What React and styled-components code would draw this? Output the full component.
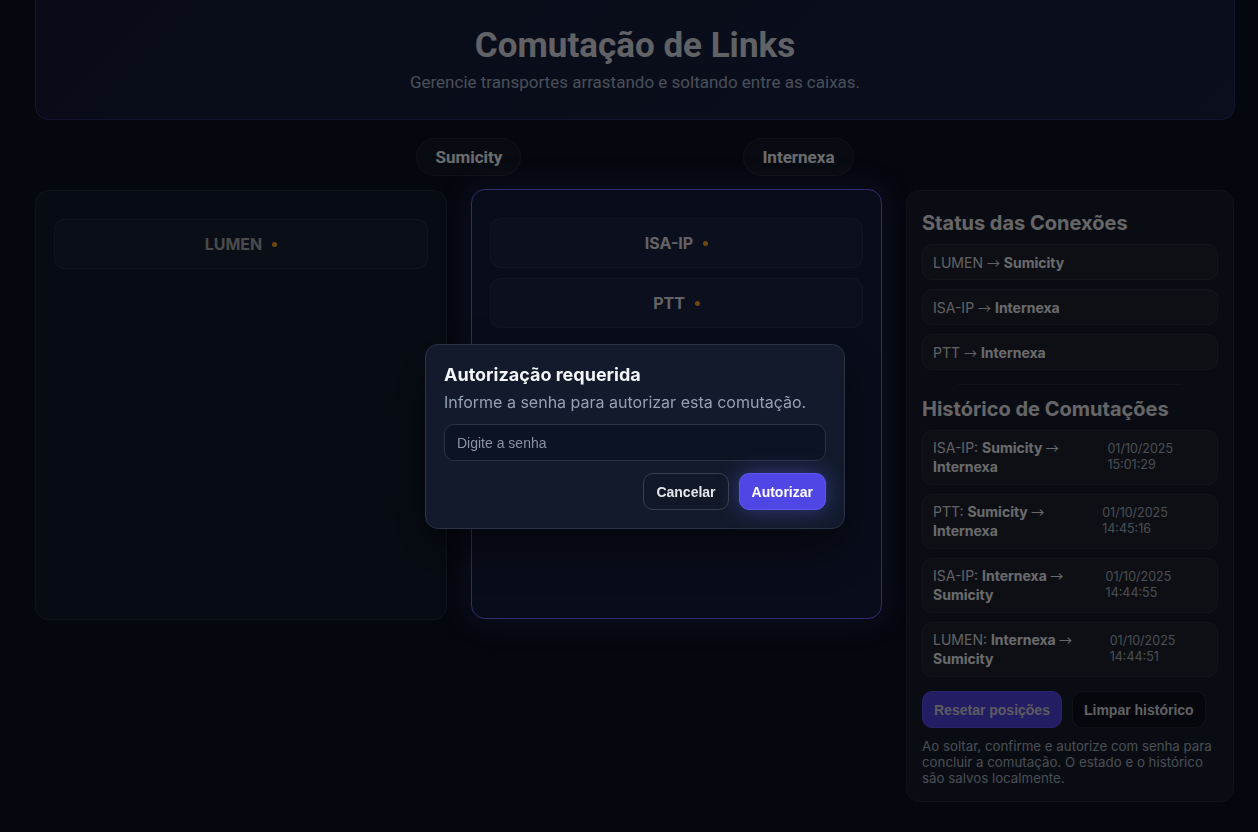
import React from "react";
import styled, { createGlobalStyle } from "styled-components";

const GlobalStyle = createGlobalStyle`
  * { box-sizing: border-box; }
  html, body { margin: 0; padding: 0; }
  body {
    background: #0b1020;
    color: #e5e7eb;
    font-family: Inter, "Noto Sans", sans-serif;
    overflow: hidden;
  }
`;

const connections = [
  { link: "LUMEN", to: "Sumicity" },
  { link: "ISA-IP", to: "Internexa" },
  { link: "PTT", to: "Internexa" },
];

const history = [
  { link: "ISA-IP", from: "Sumicity", to: "Internexa", at: "01/10/2025 15:01:29" },
  { link: "PTT", from: "Sumicity", to: "Internexa", at: "01/10/2025 14:45:16" },
  { link: "ISA-IP", from: "Internexa", to: "Sumicity", at: "01/10/2025 14:44:55" },
  { link: "LUMEN", from: "Internexa", to: "Sumicity", at: "01/10/2025 14:44:51" },
];

const App = () => {
  return (
    <>
      <GlobalStyle />
      <Page>
        <Header>
          <Title>Comutação de Links</Title>
          <Subtitle>Gerencie transportes arrastando e soltando entre as caixas.</Subtitle>
        </Header>

        <PillRow>
          <Pill>Sumicity</Pill>
          <Pill>Internexa</Pill>
        </PillRow>

        <Board>
          <DropBox>
            <LinkCard dim>
              LUMEN <Dot />
            </LinkCard>
          </DropBox>
          <DropBox active>
            <LinkCard>
              ISA-IP <Dot />
            </LinkCard>
            <LinkCard>
              PTT <Dot />
            </LinkCard>
          </DropBox>

          <Side>
            <SideTitle>Status das Conexões</SideTitle>
            <List>
              {connections.map((c) => (
                <StatusRow key={c.link}>
                  <span>
                    {c.link} <Arrow>→</Arrow> <b>{c.to}</b>
                  </span>
                </StatusRow>
              ))}
            </List>
            <Divider />
            <SideTitle>Histórico de Comutações</SideTitle>
            <List>
              {history.map((h, i) => (
                <HistoryRow key={i}>
                  <span>
                    {h.link}:{" "}
                    <b>
                      {h.from} <Arrow>→</Arrow> {h.to}
                    </b>
                  </span>
                  <When>{h.at}</When>
                </HistoryRow>
              ))}
            </List>
            <Actions>
              <Button primary>Resetar posições</Button>
              <Button>Limpar histórico</Button>
            </Actions>
            <Note>
              Ao soltar, confirme e autorize com senha para concluir a comutação. O
              estado e o histórico são salvos localmente.
            </Note>
          </Side>
        </Board>
      </Page>

      <Overlay>
        <Dialog>
          <DialogTitle>Autorização requerida</DialogTitle>
          <DialogText>Informe a senha para autorizar esta comutação.</DialogText>
          <Input type="password" placeholder="Digite a senha" />
          <DialogActions>
            <DialogButton>Cancelar</DialogButton>
            <DialogButton primary>Autorizar</DialogButton>
          </DialogActions>
        </Dialog>
      </Overlay>
    </>
  );
};

const Page = styled.div`
  width: 1235px;
  padding-left: 35px;
  margin-top: -14px;
`;

const Header = styled.header`
  height: 134px;
  padding-top: 39px;
  text-align: center;
  background: linear-gradient(135deg, #151b36, #181f40);
  border: 1px solid rgba(99, 102, 241, 0.28);
  border-radius: 14px;
`;

const Title = styled.h1`
  margin: 0;
  font-family: Roboto, "Liberation Sans", sans-serif;
  font-size: 35px;
  font-weight: 700;
  line-height: 40px;
  color: #d6d9df;
`;

const Subtitle = styled.p`
  margin: 6px 0 0;
  font-family: Roboto, "Liberation Sans", sans-serif;
  font-size: 17px;
  color: #a3afc4;
`;

const PillRow = styled.div`
  display: flex;
  justify-content: center;
  gap: 222px;
  margin: 18px 0 14px;
`;

const Pill = styled.div`
  height: 38px;
  padding: 0 18px;
  display: flex;
  align-items: center;
  border-radius: 19px;
  font-family: Roboto, "Liberation Sans", sans-serif;
  font-size: 17px;
  font-weight: 700;
  color: #eceef2;
  background: rgba(255, 255, 255, 0.04);
  border: 1px solid rgba(255, 255, 255, 0.07);
`;

const Board = styled.div`
  display: grid;
  grid-template-columns: 412px 411px 328px;
  gap: 24px;
  align-items: start;
`;

const DropBox = styled.div`
  height: 430px;
  padding: 28px 18px;
  display: flex;
  flex-direction: column;
  gap: 10px;
  border-radius: 14px;
  background: ${(p) => (p.active ? "#141b3c" : "#101a2c")};
  border: 1px solid ${(p) => (p.active ? "#6d63f0" : "rgba(255,255,255,0.07)")};
  box-shadow: ${(p) => (p.active ? "0 0 30px rgba(99,102,241,0.25)" : "none")};
  margin-top: ${(p) => (p.active ? "-1px" : "0")};
`;

const LinkCard = styled.div`
  height: 50px;
  display: flex;
  align-items: center;
  justify-content: center;
  gap: 10px;
  border-radius: 11px;
  font-size: 16px;
  font-weight: 700;
  color: ${(p) => (p.dim ? "#a4a4a8" : "#dcdce0")};
  background: rgba(255, 255, 255, 0.035);
  border: 1px solid rgba(255, 255, 255, 0.06);
`;

const Dot = styled.span`
  width: 5px;
  height: 5px;
  border-radius: 50%;
  background: #f0a21a;
`;

const Side = styled.aside`
  padding: 19px 15px 15px;
  border-radius: 14px;
  background: #161b28;
  border: 1px solid rgba(255, 255, 255, 0.06);
`;

const SideTitle = styled.h3`
  margin: 0 0 8px;
  font-size: 20px;
  font-weight: 700;
  line-height: 26px;
  color: #e3e3e6;
`;

const List = styled.div`
  display: flex;
  flex-direction: column;
  gap: 9px;
`;

const Arrow = styled.span`
  font-family: "Noto Sans CJK SC", sans-serif;
  font-size: 13px;
  font-weight: 400;
  line-height: 0;
`;

const StatusRow = styled.div`
  height: 36px;
  padding: 0 10px;
  display: flex;
  align-items: center;
  font-size: 14px;
  color: #d8d8dc;
  border-radius: 10px;
  background: rgba(255, 255, 255, 0.035);
  border: 1px solid rgba(255, 255, 255, 0.06);

  b {
    color: #ececef;
  }
`;

const Divider = styled.hr`
  margin: 14px 36px 11px;
  border: none;
  border-top: 1px solid rgba(255, 255, 255, 0.08);
`;

const HistoryRow = styled.div`
  height: 55px;
  padding: 7px 10px;
  display: flex;
  justify-content: space-between;
  align-items: flex-start;
  gap: 10px;
  font-size: 14px;
  line-height: 19px;
  color: #d8d8dc;
  border-radius: 10px;
  background: rgba(255, 255, 255, 0.035);
  border: 1px solid rgba(255, 255, 255, 0.06);

  b {
    color: #ececef;
  }
`;

const When = styled.span`
  padding-top: 3px;
  font-size: 12.5px;
  line-height: 16px;
  color: #a3acbb;
`;

const Actions = styled.div`
  display: flex;
  gap: 10px;
  margin: 14px 0 10px;
`;

const Button = styled.button`
  height: 37px;
  padding: 0 11px;
  border-radius: 10px;
  font-family: "Liberation Sans", Arial, sans-serif;
  font-size: 14px;
  font-weight: 700;
  color: ${(p) => (p.primary ? "#c9c9d6" : "#d8d8dc")};
  background: ${(p) => (p.primary ? "#4f40dc" : "#0c111c")};
  border: 1px solid ${(p) => (p.primary ? "#5a4ce6" : "rgba(255,255,255,0.1)")};
`;

const Note = styled.p`
  margin: 0;
  font-size: 13.3px;
  line-height: 16px;
  color: #a3acbb;
`;

const Overlay = styled.div`
  position: fixed;
  inset: 0;
  display: flex;
  align-items: flex-start;
  justify-content: center;
  padding: 344px 0 0 12px;
  background: rgba(0, 0, 0, 0.55);
`;

const Dialog = styled.div`
  width: 420px;
  padding: 16px 18px 18px;
  border-radius: 13px;
  background: #121a2b;
  border: 1px solid #2b3345;
  box-shadow: 0 20px 50px rgba(0, 0, 0, 0.5);
`;

const DialogTitle = styled.h2`
  margin: 0;
  font-size: 18px;
  font-weight: 700;
  line-height: 28px;
  color: #f3f5f9;
`;

const DialogText = styled.p`
  margin: 2px 0 11px;
  font-size: 16px;
  line-height: 22px;
  color: #94a0b4;
`;

const Input = styled.input`
  display: block;
  width: 100%;
  height: 37px;
  padding: 0 12px;
  border-radius: 10px;
  font-family: "Liberation Sans", Arial, sans-serif;
  font-size: 14px;
  color: #e5e7eb;
  background: #0c1322;
  border: 1px solid #2b3345;
  outline: none;

  &::placeholder {
    color: #8a93a2;
  }
`;

const DialogActions = styled.div`
  display: flex;
  justify-content: flex-end;
  gap: 10px;
  margin-top: 12px;
`;

const DialogButton = styled.button`
  height: 37px;
  padding: 0 12px;
  border-radius: 10px;
  font-family: "Liberation Sans", Arial, sans-serif;
  font-size: 14px;
  font-weight: 700;
  color: ${(p) => (p.primary ? "#ffffff" : "#e5e7eb")};
  background: ${(p) => (p.primary ? "#5046e5" : "#111827")};
  border: 1px solid ${(p) => (p.primary ? "#6058ee" : "#383f4c")};
  box-shadow: ${(p) => (p.primary ? "0 0 22px rgba(99,102,241,0.45)" : "none")};
`;

export default App;
